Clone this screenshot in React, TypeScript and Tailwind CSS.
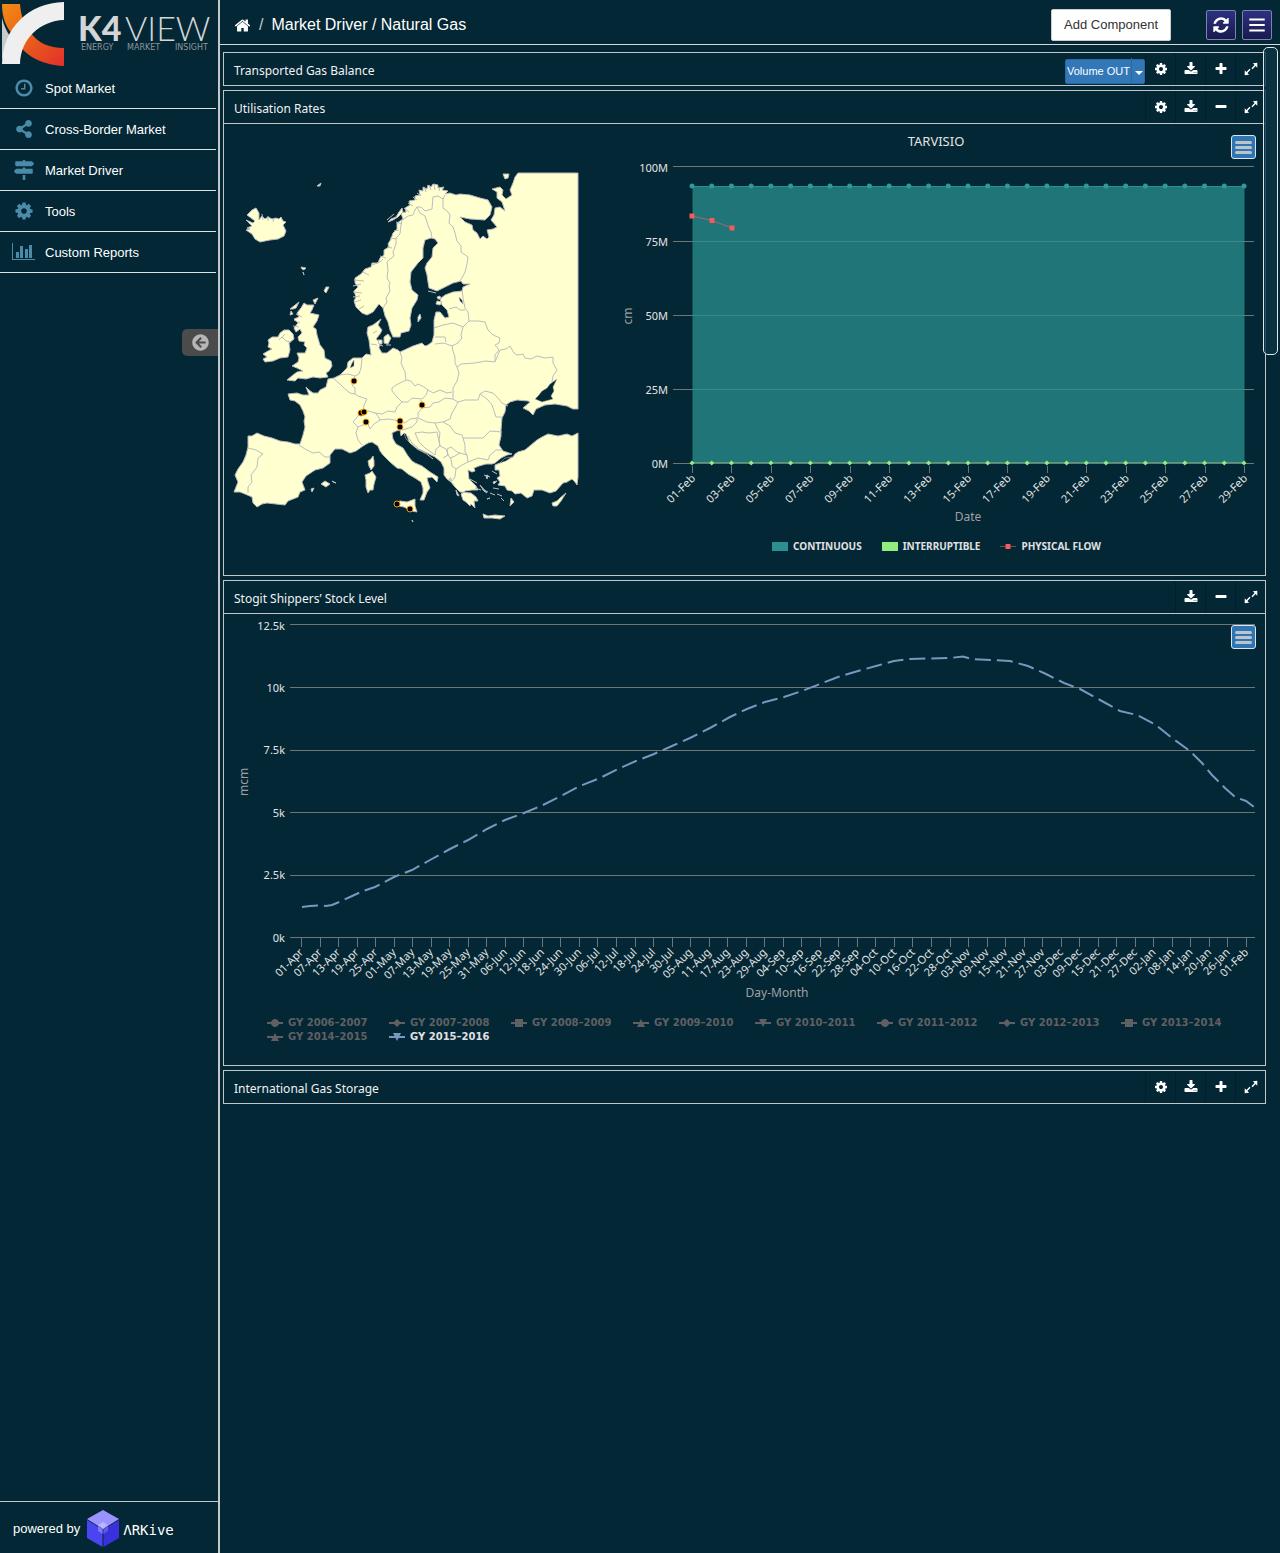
import React from "react";
import { FaShareAlt, FaMapSigns, FaArrowCircleLeft } from "react-icons/fa";

const ICONS = {
  clock:
    "M1024 544v448q0 14-9 23t-23 9h-320q-14 0-23-9t-9-23v-64q0-14 9-23t23-9h224v-352q0-14 9-23t23-9h64q14 0 23 9t9 23zm416 352q0-148-73-273t-198-198-273-73-273 73-198 198-73 273 73 273 198 198 273 73 273-73 198-198 73-273zm224 0q0 209-103 385.5t-279.5 279.5-385.5 103-385.5-103-279.5-279.5-103-385.5 103-385.5 279.5-279.5 385.5-103 385.5 103 279.5 279.5 103 385.5z",
  cog: "M1152 896q0-106-75-181t-181-75-181 75-75 181 75 181 181 75 181-75 75-181zm512-109v222q0 12-8 23t-20 13l-185 28q-19 54-39 91 35 50 107 138 10 12 10 25t-9 23q-27 37-99 108t-94 71q-12 0-26-9l-138-108q-44 23-91 38-16 136-29 186-7 28-36 28h-222q-14 0-24.5-8.5t-11.5-21.5l-28-184q-49-16-90-37l-141 107q-10 9-25 9-14 0-25-11-126-114-165-168-7-10-7-23 0-12 8-23 15-21 51-66.5t54-70.5q-27-50-41-99l-183-27q-13-2-21-12.5t-8-23.5v-222q0-12 8-23t19-13l186-28q14-46 39-92-40-57-107-138-10-12-10-24 0-10 9-23 26-36 98.5-107.5t94.5-71.5q13 0 26 10l138 107q44-23 91-38 16-136 29-186 7-28 36-28h222q14 0 24.5 8.5t11.5 21.5l28 184q49 16 90 37l142-107q9-9 24-9 13 0 25 10 129 119 165 170 7 8 7 22 0 12-8 23-15 21-51 66.5t-54 70.5q26 50 41 98l183 28q13 2 21 12.5t8 23.5z",
  home: "M1472 992v480q0 26-19 45t-45 19h-384v-384h-256v384h-384q-26 0-45-19t-19-45v-480q0-1 .5-3t.5-3l575-474 575 474q1 2 1 6zm223-69l-62 74q-8 9-21 11h-3q-13 0-21-7l-692-577-692 577q-12 8-24 7-13-2-21-11l-62-74q-8-10-7-23.5t11-21.5l719-599q32-26 76-26t76 26l244 204v-195q0-14 9-23t23-9h192q14 0 23 9t9 23v408l219 182q10 8 11 21.5t-7 23.5z",
  plus: "M1600 736v192q0 40-28 68t-68 28h-416v416q0 40-28 68t-68 28h-192q-40 0-68-28t-28-68v-416h-416q-40 0-68-28t-28-68v-192q0-40 28-68t68-28h416v-416q0-40 28-68t68-28h192q40 0 68 28t28 68v416h416q40 0 68 28t28 68z",
  minus:
    "M1600 736v192q0 40-28 68t-68 28h-1216q-40 0-68-28t-28-68v-192q0-40 28-68t68-28h1216q40 0 68 28t28 68z",
  refresh:
    "M1639 1056q0 5-1 7-64 268-268 434.5t-478 166.5q-146 0-282.5-55t-243.5-157l-129 129q-19 19-45 19t-45-19-19-45v-448q0-26 19-45t45-19h448q26 0 45 19t19 45-19 45l-137 137q71 66 161 102t187 36q134 0 250-65t186-179q11-17 53-117 8-23 30-23h192q13 0 22.5 9.5t9.5 22.5zm25-800v448q0 26-19 45t-45 19h-448q-26 0-45-19t-19-45 19-45l138-138q-148-137-349-137-134 0-250 65t-186 179q-11 17-53 117-8 23-30 23h-199q-13 0-22.5-9.5t-9.5-22.5v-7q65-268 270-434.5t480-166.5q146 0 284 55.5t245 156.5l130-129q19-19 45-19t45 19 19 45z",
  download:
    "M1344 1344q0-26-19-45t-45-19-45 19-19 45 19 45 45 19 45-19 19-45zm256 0q0-26-19-45t-45-19-45 19-19 45 19 45 45 19 45-19 19-45zm128-224v320q0 40-28 68t-68 28h-1472q-40 0-68-28t-28-68v-320q0-40 28-68t68-28h465l135 136q58 56 136 56t136-56l136-136h464q40 0 68 28t28 68zm-325-569q17 41-14 70l-448 448q-18 19-45 19t-45-19l-448-448q-31-29-14-70 17-39 59-39h256v-448q0-26 19-45t45-19h256q26 0 45 19t19 45v448h256q42 0 59 39z",
  expand:
    "M1700 92v640l-215-215-400 400-130-130 400-400-215-215zM92 1700v-640l215 215 400-400 130 130-400 400 215 215z",
  bars: "M128 256h1536v190h-1536zM128 801h1536v190h-1536zM128 1346h1536v190h-1536z",
};

function Icon({ name, className }: { name: keyof typeof ICONS; className: string }) {
  return (
    <svg viewBox="0 0 1792 1792" fill="currentColor" className={className} aria-hidden="true">
      <path d={ICONS[name]} />
    </svg>
  );
}

function BarsIcon() {
  return (
    <svg viewBox="0 0 24 18" fill="currentColor" className="h-[18px] w-6" aria-hidden="true">
      <path d="M0 0h1v16h22v1H0zM4 9h3v6H4zM8 3h3v12H8zM13 6h3v9h-3zM17 2h3v13h-3z" />
    </svg>
  );
}

function Logo() {
  return (
    <svg viewBox="0 0 218 68" className="block w-full" role="img" aria-label="K4View Energy Market Insight">
      <defs>
        <linearGradient id="lg" x1="0" y1="0" x2="1" y2="1">
          <stop offset="0" stopColor="#f28a12" />
          <stop offset="0.55" stopColor="#e85a1c" />
          <stop offset="1" stopColor="#e2302c" />
        </linearGradient>
      </defs>
      <path d="M2 4H20C21 16 24 24 30 32C38 43 49 48 64 48V66C38 65 20 52 12 34C6 26 2 18 2 4z" fill="url(#lg)" />
      <path d="M2 18C4 26 7 32 10 36L2 60z" fill="#c9cacc" />
      <path d="M64 2V20C40 21 21 38 20 64H2C3 28 28 3 64 2z" fill="#efefef" />
      <g fill="#d3d5d7">
        <text x="78" y="41" className="font-['Lato'] text-[34px] font-black">K4</text>
        <text x="125" y="41" className="font-['Lato'] text-[34px] font-light">VIEW</text>
      </g>
      <g fill="#8b979d" className="font-['DejaVu_Sans'] text-[8px]">
        <text x="81" y="50">ENERGY</text>
        <text x="127" y="50">MARKET</text>
        <text x="175" y="50">INSIGHT</text>
      </g>
    </svg>
  );
}

const NAV = [
  { label: "Spot Market", icon: <Icon name="clock" className="size-5" /> },
  { label: "Cross-Border Market", icon: <FaShareAlt className="size-[18px]" /> },
  { label: "Market Driver", icon: <FaMapSigns className="size-5" /> },
  { label: "Tools", icon: <Icon name="cog" className="size-5" /> },
  { label: "Custom Reports", icon: <BarsIcon /> },
];

function Sidebar() {
  return (
    <aside className="flex w-[220px] shrink-0 flex-col border-r-2 border-[#c3c8cb]">
      <Logo />
      <nav className="pr-[2px]">
        {NAV.map((n) => (
          <a
            key={n.label}
            href="#"
            className="flex h-[41px] items-center border-b border-[#dfe3e5] pl-[11px] text-[13px] text-white"
          >
            <span className="flex w-[34px] items-center text-[#4b8aa8]">
              <span className="flex w-[25px] justify-center">{n.icon}</span>
            </span>
            <span className="pt-[2px]">{n.label}</span>
          </a>
        ))}
      </nav>
      <button
        aria-label="Collapse menu"
        className="mt-14 flex h-[27px] w-9 items-center justify-center self-end rounded-l-[5px] bg-[#4b4b4b] text-[#b5b5b5]"
      >
        <FaArrowCircleLeft className="size-[17px]" />
      </button>
      <div className="mt-auto flex h-[52px] items-center border-t border-[#c3c8cb] pt-[3px] pl-[13px] text-[13px] text-white">
        powered by
        <svg viewBox="0 0 34 38" className="ml-[6px] h-[38px] w-[34px]" aria-hidden="true">
          <path d="M17 0L33 9L17 19L1 9z" fill="#9a92ff" />
          <path d="M1 10L16.500 19.500V37L1 28z" fill="#4a45f0" />
          <path d="M33 10L17.500 19.500V37L33 28z" fill="#3a31dd" />
          <path d="M17 12L22 15L17 19L12 15z" fill="#b9b5ff" />
          <path d="M12 16L16.500 19V24L12 21z" fill="#7d78fb" />
          <path d="M22 16L17.500 19V24L22 21z" fill="#6058ee" />
        </svg>
        <span className="ml-[3px] pt-[2px] font-['DejaVu_Sans_Mono',monospace] text-[14px]">ΛRKive</span>
      </div>
    </aside>
  );
}

type Tool = "cog" | "download" | "plus" | "minus" | "expand";
const TOOL_LABEL: Record<Tool, string> = {
  cog: "Settings",
  download: "Download",
  plus: "Open",
  minus: "Close",
  expand: "Expand",
};

function Panel({
  title,
  tools,
  extra,
  children,
}: {
  title: string;
  tools: Tool[];
  extra?: React.ReactNode;
  children?: React.ReactNode;
}) {
  return (
    <section>
      <header className="flex h-[34px] items-center border border-[#c0c6ca] pl-[10px]">
        <h2 className="mr-auto pt-1 font-['Noto_Sans',sans-serif] text-[12px] leading-4 text-[#f2f2f2]">{title}</h2>
        {extra}
        {tools.map((t) => (
          <button
            key={t}
            aria-label={TOOL_LABEL[t]}
            className="flex h-8 w-[30px] items-center justify-center border-l border-[#01202c] text-white"
          >
            <Icon name={t} className="size-[14px]" />
          </button>
        ))}
      </header>
      {children && <div className="relative border border-t-0 border-[#c0c6ca]">{children}</div>}
    </section>
  );
}

function ChartMenu() {
  return (
    <button
      aria-label="Chart menu"
      className="absolute top-[11px] right-[9px] flex h-6 w-[25px] flex-col items-center justify-center gap-[2px] rounded-[3px] border border-[#dbe6f0] bg-[#2f74b3]"
    >
      <span className="h-[3px] w-[17px] rounded-full bg-[#bdc3c9]" />
      <span className="h-[3px] w-[17px] rounded-full bg-[#bdc3c9]" />
      <span className="h-[3px] w-[17px] rounded-full bg-[#bdc3c9]" />
    </button>
  );
}

const LAND = [
  // continental Europe
  "578,173 518,173 515,177 513,183 510,190 512,195 506,199 502,195 503,190 500,187 492,189 497,192 497,198 502,202 505,211 500,207 495,208 494,215 491,220 497,227 493,229 487,230 489,237 487,239 483,236 480,239 477,233 473,230 472,225 465,222 460,217 470,219 485,220 490,215 492,207 488,200 480,198 470,195 460,194 456,195 450,193 445,194 448,191 442,190 444,187 438,188 438,185 433,184 431,187 428,185 427,189 423,187 423,191 419,190 420,195 415,196 415,200 409,201 410,205 405,208 406,212 401,213 403,219 397,223 397,229 393,233 391,239 388,244 389,247 384,250 384,255 380,258 378,263 372,263 371,267 365,269 361,274 355,278 355,283 358,287 354,291 356,297 354,301 356,307 362,313 367,315 373,312 379,304 383,308 385,316 388,322 390,330 393,337 400,337 401,333 409,331 411,325 410,318 412,308 417,300 418,295 412,290 410,282 411,272 418,263 423,258 423,248 425,240 431,238 435,239 438,243 433,248 432,257 427,263 425,268 427,275 428,282 429,288 437,291 443,288 453,283 461,281 463,284 470,284 463,287 462,291 453,292 445,295 440,299 442,305 447,310 449,317 445,318 440,312 436,312 434,320 434,335 432,342 428,345 425,346 422,343 413,346 400,352 398,350 393,348 387,353 382,353 379,348 380,342 376,339 380,334 382,330 378,325 381,319 377,322 373,325 368,327 367,333 369,340 370,348 371,355 366,354 362,358 353,358 348,362 347,368 340,375 334,378 328,379 326,387 320,390 318,393 313,393 309,390 306,387 309,395 303,395 297,393 288,394 290,400 295,401 300,405 303,411 305,417 304,421 305,427 303,435 300,444 295,444 288,442 280,441 272,438 264,436 257,433 252,436 248,436 248,447 246,455 243,462 238,469 235,475 238,482 234,492 240,492 245,494 252,497 253,503 257,507 262,504 267,503 276,504 285,505 288,501 293,499 298,497 300,492 305,490 302,482 306,476 312,472 315,470 323,468 330,463 330,455 335,449 342,449 350,453 356,451 363,446 368,443 372,442 378,446 380,451 383,455 390,462 397,468 402,469 408,474 415,478 421,482 423,488 423,493 420,500 424,500 427,492 430,488 428,482 427,478 432,477 437,482 438,477 430,472 422,466 415,463 412,461 408,456 403,448 396,444 393,439 392,433 396,431 400,430 401,436 404,433 407,439 410,443 416,448 421,450 427,453 435,457 441,462 444,468 444,475 447,479 451,482 455,487 458,490 460,492 471,493 476,497 478,501 474,501 475,508 471,504 470,506 466,502 463,500 461,494 465,491 472,490 478,490 476,486 474,484 469,479 468,470 472,472 475,471 474,468 479,466 486,464 492,464 495,463 501,458 507,455 512,454 503,451 499,445 501,436 501,430 502,418 505,412 506,405 510,402 517,400 528,401 530,402 523,408 529,411 533,415 536,409 545,405 555,404 567,406 573,409 578,409",
  // Anatolia
  "578,433 572,436 567,434 558,436 548,434 542,437 537,440 531,445 525,450 518,452 515,454 513,457 507,459 500,463 495,465 495,470 499,470 500,476 497,478 500,482 498,485 505,486 507,490 512,491 515,494 521,493 527,498 532,496 534,490 542,490 550,493 556,491 563,483 567,482 572,479 575,482 577,485 578,477",
  // Great Britain
  "304,303 307,305 314,305 312,310 310,313 319,315 317,321 313,327 316,329 317,335 320,345 324,350 325,358 331,361 332,366 329,371 326,373 328,377 320,378 313,377 306,379 298,378 295,381 287,380 293,375 297,372 303,371 297,368 292,366 298,362 299,358 297,353 305,353 307,348 304,345 305,342 299,341 298,337 302,333 300,329 296,332 294,328 298,323 294,319 299,317 297,313 301,308",
  // Ireland
  "284,330 289,330 293,334 294,339 289,343 290,350 288,357 280,358 273,361 265,362 263,359 267,357 263,354 268,351 272,349 268,347 269,343 268,340 272,337 278,337 280,333",
  // Iceland
  "246,220 253,223 255,221 247,215 252,210 256,208 259,213 259,220 262,216 265,219 268,217 272,219 276,218 279,219 281,217 283,221 286,222 283,225 286,231 284,236 278,239 270,240 260,242 255,239 252,234 246,230 250,229 247,228 252,226",
  "373,456 371,459 368,461 369,466 371,470 374,466 374,461",
  "365,475 370,473 372,471 376,477 374,484 373,490 370,490 368,493 366,487 366,480",
  "395,503 400,501 407,502 415,499 415,506 417,512 412,511 404,507 399,506",
  "483,514 488,516 495,515 505,516 500,519 492,518 484,518",
  "552,503 557,501 560,498 566,493 561,501 557,506 553,506",
  "321,484 325,481 330,484 326,487",
  "384,337 388,334 391,338 388,344 384,343",
  "378,340 382,340 382,344 379,344",
  "420,314 421,318 418,322 418,317",
  "437,301 442,302 440,305 436,304",
  "437,297 440,296 441,299 438,299",
  "503,174 509,174 508,178 505,179",
  "317,186 321,183 320,186",
  "301,267 306,268 304,270 302,269",
  "303,272 304,275",
  "326,287 329,287 326,293 324,291",
  "313,300 318,298 315,304",
  "290,309 299,302 296,308 293,309",
  "291,311 293,314 290,315",
  "388,222 391,219 396,217 399,212 402,208 403,212 398,217 393,220",
  "311,489 314,488 312,492",
  "332,481 336,483 333,482",
  "412,520 413,522",
  "480,485 487,493 484,491",
  "501,498 504,501",
  "511,498 514,502 510,506",
  "486,476 488,475 487,479",
  "487,499 490,498",
  "493,482 497,481 494,484",
  "451,478 449,479 451,482",
  "456,490 457,495 459,496",
];

const SEAS = [
  "557,379 550,384 547,388 542,391 538,396 535,399 542,402 553,399 551,396 554,391 553,387",
  "459,297 462,300 463,304 460,301",
  "464,304 465,306",
  "352,363 354,360 354,366 350,368",
  "500,463 505,458 512,457 506,461",
  "404,433 406,434 409,441 406,439",
];

// fjords, skerries and small islands along the coasts
const INLETS = [
  "354,280 364,281", "353,286 361,284", "353,292 362,293", "353,297 360,296", "355,302 361,300", "359,309 364,306",
  "363,272 369,275", "372,265 380,262 383,259", "380,256 386,258", "387,247 392,248", "390,238 396,239",
  "394,231 399,230", "396,222 402,224", "404,208 409,212", "408,203 413,206", "413,197 417,200", "417,193 421,196",
  "424,187 426,192", "429,185 431,190", "434,184 435,190", "440,187 439,191", "387,220 394,214",
  "294,320 300,323", "293,326 299,327", "296,314 302,317", "408,436 412,443", "411,442 418,448", "417,449 425,453",
  "424,452 433,459", "470,479 477,483", "475,488 481,490", "482,489 488,492", "484,475 490,477", "493,488 499,489",
  "490,493 495,495", "497,494 502,496", "492,471 497,474", "377,331 373,333", "262,214 263,220", "268,216 268,221",
  "274,218 273,222", "379,345 383,346", "386,345 391,345", "428,291 436,293",
];

const BORDERS = [
  "383,308 387,302 386,298 390,291 389,286 390,283 387,278 388,270 387,262 389,260 394,256 393,252 396,244 396,238 400,234 401,225 402,220 405,218 408,216 413,215 415,210 417,207 421,207 425,211 432,209 433,197 438,196 443,199 445,195",
  "417,207 420,213 425,216 427,222 429,228 431,232 432,238",
  "443,198 443,208 448,212 450,215 449,223 453,227 455,233 457,241 461,246 461,252 468,257 467,264 465,272 462,278 459,282",
  "449,309 456,307 460,310 465,310",
  "462,290 463,298 465,308 468,312 469,321 463,327 453,323 443,325 434,328",
  "469,321 478,321 485,322 488,330 493,335 500,338 499,343 495,345 499,350 495,355 495,361",
  "463,327 461,335 462,338 458,343 452,346 444,343 435,344",
  "435,337 445,337 446,342",
  "452,346 453,351 455,357 455,363 457,367 459,373 457,381 453,388 453,399",
  "457,367 461,364 475,363 486,361 495,362 500,350 506,349 510,346 514,353 517,355 523,354 525,358 531,359 537,356 545,358 553,357 553,363 557,370 553,376 552,382",
  "400,352 402,358 401,363 405,372 406,380",
  "392,388 396,385 406,380 411,381 415,386 418,384 424,387 428,390 426,395 422,399 412,398 408,402 402,402 397,397 392,391 392,388",
  "428,390 433,393 440,390 447,393 452,392",
  "453,399 445,398 439,402 433,403 430,407 422,408 421,400",
  "453,399 458,402 455,408 452,413 450,419 443,422 435,423 427,422 418,418 418,413 422,408",
  "458,402 465,400 478,400 480,394 485,391 493,393 498,398 502,403 508,406",
  "480,394 487,399 492,405 494,411 496,417 502,417",
  "435,423 437,428 440,433 439,440 440,446 446,449 448,455",
  "443,422 450,426 455,433 462,435 463,438 475,438 483,438 490,431 502,432",
  "463,438 465,445 465,452 467,455 468,462 478,458 488,460 490,455 496,450 502,450",
  "450,458 455,456 460,453 467,455",
  "443,458 448,455 451,459 452,466 456,469 455,477 452,481",
  "456,469 462,465 468,462",
  "448,455 447,449 451,447 457,452 460,453",
  "415,433 422,432 429,433 437,432 440,446 436,449 435,455 425,448 419,442 415,433",
  "400,422 405,423 410,419 417,418 417,422 412,427 402,430",
  "362,412 358,416 353,422 358,427 363,425 368,424 370,429 374,424 380,420 378,416 375,413 368,411 362,412",
  "380,420 388,419 395,420 400,422",
  "375,413 382,414 388,411 395,412 397,407 402,402",
  "363,411 364,405 367,399 358,396 355,394 350,393 345,389 340,384 333,378",
  "355,394 355,388 352,385 354,381 355,376 348,374 340,375",
  "355,376 359,374 361,368 362,358",
  "358,427 356,433 358,440 362,445",
  "299,445 305,449 313,453 319,452 325,457 330,457",
  "248,448 256,450 263,454 258,458 257,467 251,475 252,482 248,487 248,493",
  "291,342 286,341 282,337 279,340 285,334",
  "371,344 377,345",
];

const STATIONS = [
  [354, 381], [361, 413], [364, 412], [366, 422], [422, 405], [400, 421], [400, 427], [397, 504], [410, 509],
];

function EuropeMap() {
  return (
    <svg viewBox="224 124 384 451" className="block w-full" role="img" aria-label="Map of Europe">
      <g fill="#ffffd0" stroke="#b9b9bd" strokeWidth="1" strokeLinejoin="round">
        {LAND.map((p, i) => (
          <polygon key={i} points={p} />
        ))}
      </g>
      <g fill="#032734" stroke="#b9b9bd" strokeWidth="0.5">
        {SEAS.map((p, i) => (
          <polygon key={i} points={p} />
        ))}
      </g>
      <g fill="none" stroke="#bdbdbd" strokeWidth="1" strokeLinejoin="round">
        {BORDERS.map((p, i) => (
          <polyline key={i} points={p} />
        ))}
        {INLETS.map((p, i) => (
          <polyline key={i} points={p} />
        ))}
      </g>
      {STATIONS.map(([x, y], i) => (
        <circle key={i} cx={x} cy={y} r="3" fill="#000" stroke="#f59a00" strokeWidth="1" />
      ))}
    </svg>
  );
}

const DAYS = Array.from({ length: 29 }, (_, i) => 692 + (i * 552) / 28);

function UtilisationChart() {
  return (
    <svg viewBox="608 124 657 404" className="block w-full font-['Noto_Sans',sans-serif]" role="img" aria-label="Tarvisio utilisation">
      <text x="936" y="146" textAnchor="middle" fill="#e4e4e4" className="text-[13px]">TARVISIO</text>
      {["100M", "75M", "50M", "25M", "0M"].map((l, i) => (
        <g key={l}>
          <path d={`M673 ${[166, 241, 315, 389, 463][i]}.5H1254`} stroke="#6f7678" />
          <text x="668" y={[172, 246, 320, 394, 468][i]} textAnchor="end" fill="#e4e4e4" className="text-[11px]">{l}</text>
        </g>
      ))}
      <rect x="692.5" y="186" width="552" height="277" fill="#2b908f" fillOpacity="0.75" />
      <path d="M692.500 186.500H1244" stroke="#2b908f" />
      <path d="M692.500 462.500H1244" stroke="#4f9f78" />
      {DAYS.map((x, i) => (
        <g key={i}>
          <circle cx={x} cy="186" r="2.500" fill="#2f9a98" />
          <path d={`M${x} 460.500l2.500 2.500l-2.500 2.500l-2.500 -2.500z`} fill="#90ee7e" />
          {i % 2 === 0 && (
            <>
              <path d={`M${Math.round(x)}.500 466V473`} stroke="#707073" />
              <text
                transform={`translate(${x + 4} 479) rotate(-45)`}
                textAnchor="end"
                fill="#e4e4e4"
                className="text-[11px]"
              >
                {String(i + 1).padStart(2, "0")}-Feb
              </text>
            </>
          )}
        </g>
      ))}
      <path d="M692 216L712 220.500L732 228" fill="none" stroke="#a46a68" />
      <path d="M689.500 213.500h5v5h-5zM709.500 218h5v5h-5zM729.500 225.500h5v5h-5z" fill="#f45b5b" />
      <text x="968" y="521" textAnchor="middle" fill="#a0a0a3" className="text-[12px]">Date</text>
      <text transform="translate(632 316) rotate(-90)" textAnchor="middle" fill="#a0a0a3" className="text-[12px]">cm</text>
    </svg>
  );
}

const MONTHS: [string, number[]][] = [
  ["Apr", [1, 7, 13, 19, 25]],
  ["May", [1, 7, 13, 19, 25, 31]],
  ["Jun", [6, 12, 18, 24, 30]],
  ["Jul", [6, 12, 18, 24, 30]],
  ["Aug", [5, 11, 17, 23, 29]],
  ["Sep", [4, 10, 16, 22, 28]],
  ["Oct", [4, 10, 16, 22, 28]],
  ["Nov", [3, 9, 15, 21, 27]],
  ["Dec", [3, 9, 15, 21, 27]],
  ["Jan", [2, 8, 14, 20, 26]],
  ["Feb", [1]],
];
const STOCK_LABELS = MONTHS.flatMap(([m, ds]) => ds.map((d) => `${String(d).padStart(2, "0")}-${m}`));

const STOCK =
  "302,907 310,906 318,905.5 326,906 332,905 338,902.500 350,897 363,891 375,887 394,877 412,870 430,860 450,849 468,840 487,829 505,820 524,813 543,805 561,796 580,786 600,778 618,769 636,761 654,754 672,746 690,738 710,728 730,717 747,709 765,702 784,697 802,691 820,684 838,677 858,671 876,666 894,661 910,659 930,658.500 950,658 963,656.500 972,659 990,660 1010,661 1028,666 1046,674 1064,683 1080,689 1100,700 1120,711 1137,715 1156,725 1172,738 1190,751 1202,763 1212,775 1225,788 1235,797 1246,801 1254,807";

function StockChart() {
  return (
    <svg viewBox="224 614 1041 390" className="block w-full font-['Noto_Sans',sans-serif]" role="img" aria-label="Stogit shippers' stock level">
      {["12.5k", "10k", "7.5k", "5k", "2.5k", "0k"].map((l, i) => (
        <g key={l}>
          <path d={`M290 ${[624, 687, 750, 812, 875, 937][i]}.5H1255`} stroke="#707678" />
          <text x="285" y={[630, 692, 754, 817, 879, 942][i]} textAnchor="end" fill="#e4e4e4" className="text-[11px]">{l}</text>
        </g>
      ))}
      {STOCK_LABELS.map((l, i) => {
        const x = 301 + (i * 945) / 51;
        return (
          <g key={l}>
            <path d={`M${Math.round(x)}.5 938V947`} stroke="#707678" />
            <text transform={`translate(${x + 3} 953) rotate(-45)`} textAnchor="end" fill="#e4e4e4" className="text-[11px]">{l}</text>
          </g>
        );
      })}
      <polyline points={STOCK} fill="none" stroke="#7798bf" strokeWidth="2" strokeDasharray="16 6" />
      <text x="777" y="997" textAnchor="middle" fill="#a0a0a3" className="text-[12px]">Day-Month</text>
      <text transform="translate(248 782) rotate(-90)" textAnchor="middle" fill="#a0a0a3" className="text-[12px]">mcm</text>
    </svg>
  );
}

const MARKS = {
  circle: "M8 3a4 4 0 1 0 .01 0z",
  diamond: "M8 3l4 4l-4 4l-4 -4z",
  square: "M4 3h8v8h-8z",
  up: "M8 3l4 8h-8z",
  down: "M4 3h8l-4 8z",
};
const SEASONS: [string, keyof typeof MARKS][] = [
  ["GY 2006–2007", "circle"],
  ["GY 2007–2008", "diamond"],
  ["GY 2008–2009", "square"],
  ["GY 2009–2010", "up"],
  ["GY 2010–2011", "down"],
  ["GY 2011–2012", "circle"],
  ["GY 2012–2013", "diamond"],
  ["GY 2013–2014", "square"],
  ["GY 2014–2015", "up"],
  ["GY 2015–2016", "down"],
];

export default function App() {
  return (
    <div className="flex min-h-screen bg-[#032734] font-['Liberation_Sans',Arial,sans-serif] text-white">
      <Sidebar />
      <main className="relative min-w-0 flex-1">
        <header className="flex h-[45px] items-center border-b border-[#d5d9db] pt-[6px] pr-2 pl-[14px]">
          <a href="#" aria-label="Home">
            <Icon name="home" className="size-[17px]" />
          </a>
          <span className="mx-2 text-[16px] text-[#c8ccce]">/</span>
          <h1 className="text-[16px]">Market Driver / Natural Gas</h1>
          <button className="ml-auto h-8 rounded-[2px] border border-[#ccc] bg-white px-3 text-[13px] text-[#333]">
            Add Component
          </button>
          <button
            aria-label="Refresh"
            className="ml-[35px] flex size-[30px] items-center justify-center rounded-[2px] border border-[#7f80b6] bg-linear-to-b from-[#2b3180] to-[#191b4e]"
          >
            <Icon name="refresh" className="size-[18px]" />
          </button>
          <button
            aria-label="Menu"
            className="ml-[6px] flex size-[30px] items-center justify-center rounded-[2px] border border-[#7f80b6] bg-linear-to-b from-[#2b3180] to-[#191b4e]"
          >
            <Icon name="bars" className="size-[18px]" />
          </button>
        </header>

        <div className="flex flex-col gap-1 pt-[7px] pr-[14px] pl-[3px]">
          <Panel
            title="Transported Gas Balance"
            tools={["cog", "download", "plus", "expand"]}
            extra={
              <div className="relative mt-1">
                <select
                  aria-label="Volume"
                  className="h-[25px] w-20 appearance-none rounded-[2px] border border-[#2a68a2] bg-[#3278b8] pl-px text-[11px] text-white"
                >
                  <option>Volume OUT</option>
                </select>
                <span className="pointer-events-none absolute top-0 right-0 flex h-[25px] w-[14px] items-center justify-center border-l border-[#2a68a2] pt-1">
                  <span className="border-x-4 border-t-4 border-x-transparent border-t-white" />
                </span>
              </div>
            }
          />
          <Panel title="Utilisation Rates" tools={["cog", "download", "minus", "expand"]}>
            <div className="grid grid-cols-[384fr_657fr]">
              <EuropeMap />
              <div>
                <UtilisationChart />
                <div className="flex justify-center gap-5 pt-[10px] pb-[21px] font-['Noto_Sans',sans-serif] text-[10px] leading-4 font-bold text-[#e0e0e3]">
                  <button className="flex items-center gap-[5px]">
                    <span className="h-[9px] w-4 bg-[#2b908f]" />
                    CONTINUOUS
                  </button>
                  <button className="flex items-center gap-[5px]">
                    <span className="h-[9px] w-4 bg-[#90ee7e]" />
                    INTERRUPTIBLE
                  </button>
                  <button className="flex items-center gap-[5px]">
                    <svg viewBox="0 0 16 14" className="h-[14px] w-4" aria-hidden="true">
                      <path d="M0 7.500H16" stroke="#7c484c" />
                      <path d="M5.500 5h5v5h-5z" fill="#f45b5b" />
                    </svg>
                    PHYSICAL FLOW
                  </button>
                </div>
              </div>
            </div>
            <ChartMenu />
          </Panel>
          <Panel title="Stogit Shippers’ Stock Level" tools={["download", "minus", "expand"]}>
            <StockChart />
            <div className="flex flex-wrap pt-3 pb-[21px] pl-[43px] font-['DejaVu_Sans',sans-serif] text-[10px] leading-[14px] font-bold">
              {SEASONS.map(([label, mark], i) => (
                <button
                  key={label}
                  className={
                    i === 9
                      ? "flex w-[122px] items-center gap-[5px] whitespace-nowrap text-[#e0e0e3]"
                      : "flex w-[122px] items-center gap-[5px] whitespace-nowrap text-[#606063]"
                  }
                >
                  <svg
                    viewBox="0 0 16 14"
                    className={i === 9 ? "h-[14px] w-4 text-[#7798bf]" : "h-[14px] w-4 text-[#606063]"}
                    fill="currentColor"
                    aria-hidden="true"
                  >
                    <path d="M0 6h16v2H0z" />
                    <path d={MARKS[mark]} />
                  </svg>
                  {label}
                </button>
              ))}
            </div>
            <ChartMenu />
          </Panel>
          <Panel title="International Gas Storage" tools={["cog", "download", "plus", "expand"]} />
        </div>
        <div className="absolute top-[47px] right-[2px] h-[308px] w-[15px] rounded-[5px] border border-[#dfe8ea] bg-[#0b3444]/80" />
      </main>
    </div>
  );
}
